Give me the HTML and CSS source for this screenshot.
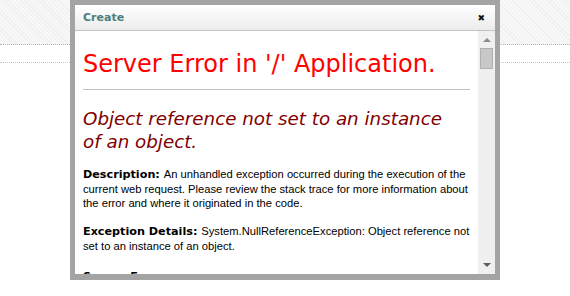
FILE: index.html
```html
<!DOCTYPE html>
<html lang="en">
<head>
    <meta charset="UTF-8">
    <title>Create</title>
    <link rel="stylesheet" href="styles.css">
</head>
<body>
    <div class="band"></div>
    <div class="strip"></div>

    <div class="dialog">
        <div class="dialog-head">
            <span class="title">Create</span>
            <span class="close">&#x2716;</span>
        </div>
        <div class="frame">
            <div class="doc">
                <h1>Server Error in '/' Application.</h1>
                <hr class="rule">
                <h2>Object reference not set to an instance of an object.</h2>
                <p><b>Description: </b>An unhandled exception occurred during the execution of the current web request. Please review the stack trace for more information about the error and where it originated in the code.</p>
                <p><b>Exception Details: </b>System.NullReferenceException: Object reference not set to an instance of an object.</p>
                <p class="src"><b>Source Error:</b></p>
            </div>
            <div class="scroll">
                <span class="arrow up"></span>
                <span class="thumb"></span>
                <span class="track"></span>
                <span class="arrow down"></span>
            </div>
        </div>
    </div>
</body>
</html>
```

FILE: styles.css
```css
body {
    margin: 0;
    background-color: #fff;
    font-family: "DejaVu Sans", Verdana, sans-serif;
}

.band {
    height: 44px;
    background-color: #f8f8f8;
    background-image: repeating-linear-gradient(45deg, #efefef 0 1px, transparent 1px 3px);
    border-bottom: 1px dotted #b4b4b4;
}
.strip {
    height: 17px;
    border-bottom: 1px dotted #c4c4c4;
}

/* modal sits over the page */
.dialog {
    position: absolute;
    top: 0;
    left: 70px;
    width: 420px;
    height: 269px;
    border: 5px solid #a4a4a4;
    border-bottom-width: 6px;
    background: #fff;
    display: flex;
    flex-direction: column;
}
.dialog-head {
    height: 25px;
    flex: none;
    display: flex;
    align-items: center;
    justify-content: space-between;
    padding: 0 8px;
    background: linear-gradient(#ffffff, #ececec);
    border-bottom: 1px solid #c4c4c4;
}
.title {
    font-size: 11px;
    font-weight: bold;
    color: #4b807c;
}
.close {
    font-size: 9px;
    color: #111;
    margin-right: 2px;
}

.frame {
    flex: 1;
    display: flex;
    min-height: 0;
}
.doc {
    flex: 1;
    overflow: hidden;
    padding: 0 8px;
}
.doc h1 {
    margin: 19px 0 0;
    font-size: 24px;
    font-weight: normal;
    line-height: 28px;
    color: red;
}
.rule {
    margin: 11px 0 0;
    border: 0;
    border-top: 1px solid #c0c0c0;
}
.doc h2 {
    margin: 17px 20px 0 0;
    font-size: 18.3px;
    font-weight: normal;
    font-style: italic;
    line-height: 23px;
    color: maroon;
}
.doc p {
    margin: 14px 0 0;
    font-family: "Liberation Sans", Arial, sans-serif;
    font-size: 11.2px;
    line-height: 14px;
    color: #000;
}
.doc p b {
    font-family: "DejaVu Sans", Verdana, sans-serif;
}
.doc p.src {
    margin-top: 16px;
}

.scroll {
    width: 17px;
    flex: none;
    display: flex;
    flex-direction: column;
    align-items: center;
    background: #f0f0f0;
}
.arrow {
    width: 0;
    height: 0;
    border-left: 4px solid transparent;
    border-right: 4px solid transparent;
}
.up {
    margin-top: 7px;
    border-bottom: 4px solid #8c8c8c;
}
.down {
    margin-bottom: 7px;
    border-top: 4px solid #5c5c5c;
}
.thumb {
    margin-top: 6px;
    width: 11px;
    height: 19px;
    background: #c8c8c8;
    border: 1px solid #b0b0b0;
}
.track {
    flex: 1;
}
```
